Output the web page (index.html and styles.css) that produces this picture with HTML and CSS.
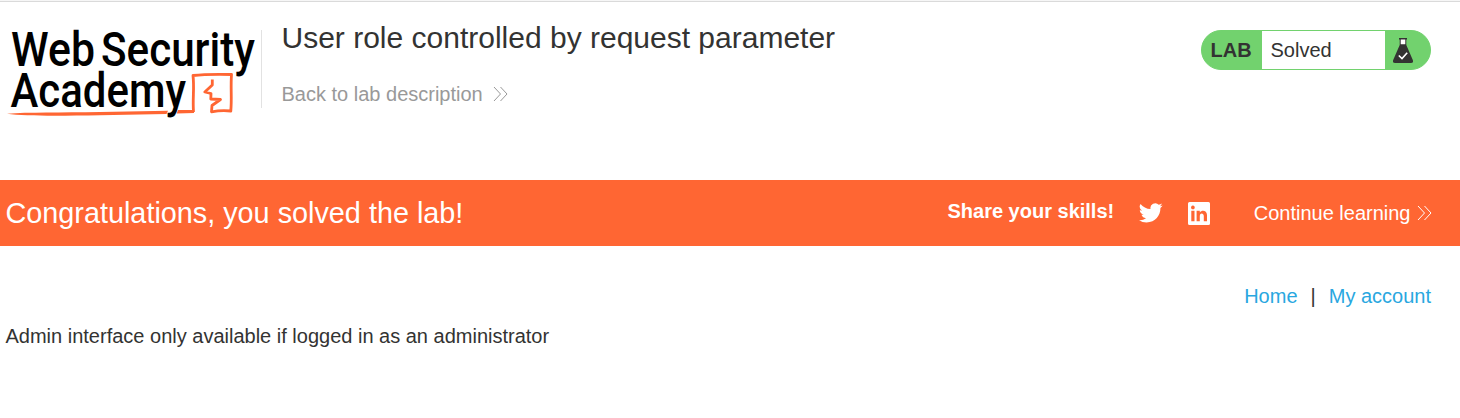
FILE: index.html
```html
<!DOCTYPE html>
<html lang="en">
<head>
<meta charset="utf-8">
<title>User role controlled by request parameter</title>
<link rel="stylesheet" href="styles.css">
</head>
<body>
<header class="lab-header">
  <svg class="logo" viewBox="0 -16 256 112" role="img" aria-label="Web Security Academy">
    <g class="logo-text">
      <text x="11" y="38" textLength="84" lengthAdjust="spacingAndGlyphs">Web</text>
      <text x="101" y="38" textLength="154" lengthAdjust="spacingAndGlyphs">Security</text>
      <text x="10.500" y="79" textLength="175.500" lengthAdjust="spacingAndGlyphs">Academy</text>
    </g>
    <path class="logo-rule" d="M7 85.800 C28 84 60 84.800 100 84 L168 82.800 L166.500 86 L100 87.200 C60 87.900 25 88.200 7 85.800Z M178 82 L194 81.900 L194 85 L176.800 85.500Z"/>
    <path class="logo-mark" d="M193.500 84 C192.500 70 194.500 60 193 47.500 Q206 46 231.500 46.500 C230.500 60 232 70 230.800 83 Q222 81.800 211.500 83.800 L212 77.500 L220.500 71.500 L210.800 71 L211 65.500 L204.800 64 L212.300 57 L212.300 51.500"/>
  </svg>
  <div class="title-block">
    <h1 class="title">User role controlled by request parameter</h1>
    <a class="back-link">Back to lab description
      <svg class="chevrons" viewBox="0 0 15 16"><path d="M1 1 7.500 8 1 15M7.500 1 14 8 7.500 15"/></svg>
    </a>
  </div>
  <div class="lab-status">
    <span class="lab-label">LAB</span>
    <span class="lab-state">Solved</span>
    <span class="lab-icon">
      <svg class="flask" viewBox="0 0 20 26">
        <path class="flask-glass" d="M7 1h6v6H7z"/>
        <path class="flask-body" d="M6 0h8v1.500h-.7V7l6.400 14.800Q21 25 17.800 25H2.200Q-1 25 .3 21.800L6.700 7V1.500H6zM7.700 1.500V6.300h4.600V1.500z"/>
        <path class="flask-check" d="M5.800 17.500 9 20.500 14.200 14.800"/>
      </svg>
    </span>
  </div>
</header>
<section class="banner">
  <h2 class="banner-title">Congratulations, you solved the lab!</h2>
  <span class="share">Share your skills!</span>
  <svg class="twitter" viewBox="0 0 24 20"><path d="M23.600 2.400c-.9.4-1.800.6-2.800.8 1-.6 1.800-1.600 2.100-2.700-.9.6-2 1-3.100 1.200A4.900 4.900 0 0 0 11.500 6.100C7.500 5.900 3.900 4 1.500 1a4.900 4.900 0 0 0 1.500 6.500c-.8 0-1.500-.2-2.200-.6v.1c0 2.300 1.700 4.300 3.900 4.700-.7.200-1.500.2-2.200.1.600 1.900 2.400 3.300 4.500 3.400A9.800 9.800 0 0 1 0 17.200 13.900 13.900 0 0 0 7.500 19.400c9 0 13.900-7.400 13.900-13.900v-.6c.900-.7 1.700-1.500 2.200-2.500z"/></svg>
  <svg class="linkedin" viewBox="0 0 22 23"><path fill-rule="evenodd" d="M1.500 0h19Q22 0 22 1.500v20Q22 23 20.500 23h-19Q0 23 0 21.500v-20Q0 0 1.500 0zM3.300 8.800v10.500h3.200V8.800zM4.900 3.600a1.850 1.850 0 1 0 .01 0zM8.600 8.800v10.500h3.200v-5.200c0-3.500 4-3.200 4 0v5.200H19v-6.200c0-5.100-5.400-5.500-7.200-2.700V8.800z"/></svg>
  <a class="continue">Continue learning
    <svg class="chevrons" viewBox="0 0 15 16"><path d="M1 1 7.500 8 1 15M7.500 1 14 8 7.500 15"/></svg>
  </a>
</section>
<main class="content">
  <nav class="nav"><a class="nav-link">Home</a><span>|</span><a class="nav-link">My account</a></nav>
  <p class="message">Admin interface only available if logged in as an administrator</p>
</main>
</body>
</html>
```
FILE: styles.css
```css
* { box-sizing: border-box; }
body {
  margin: 0;
  background: #fff;
  color: #333332;
  font: 20px/24px "Liberation Sans", Arial, sans-serif;
}
.lab-header {
  display: flex;
  align-items: flex-start;
  height: 180px;
  padding: 29px 29px 0 0;
  border-top: 1px solid #f6f6f6;
  box-shadow: inset 0 1px #dadada;
}
.logo { width: 256px; height: 112px; margin: -18px 5px 0 0; flex: none; }
.logo-text { font: 500 47.5px Roboto, sans-serif; fill: #000; }
.logo-rule { fill: #ff6633; }
.logo-mark { fill: none; stroke: #ff6633; stroke-width: 2.8; stroke-linejoin: round; }
.title-block {
  height: 78px;
  padding-left: 19.5px;
  border-left: 1px solid #e2e2e2;
}
.title { margin: -9px 0 0; font-size: 30px; line-height: 34px; font-weight: 400; white-space: nowrap; }
.back-link { display: flex; align-items: center; gap: 10.5px; margin-top: 27px; color: #999; }
.chevrons { width: 15px; height: 16px; fill: none; stroke: currentColor; stroke-width: 1; }
.lab-status {
  display: flex;
  width: 230px;
  height: 40px;
  margin-left: auto;
  border: 1px solid #72d26e;
  border-radius: 20px;
  background: #72d26e;
  line-height: 39px;
  overflow: hidden;
}
.lab-label { width: 60px; padding-left: 8.5px; font-weight: 700; }
.lab-state { width: 123px; padding-left: 8.5px; background: #fff; }
.lab-icon { padding: 7px 0 0 8px; line-height: 0; }
.flask { width: 20px; height: 26px; }
.flask-glass { fill: #fff; }
.flask-body { fill: #333332; fill-rule: evenodd; }
.flask-check { fill: none; stroke: #fff; stroke-width: 1.6; }
.banner {
  display: flex;
  align-items: center;
  height: 66px;
  padding: 0 28.5px 0 5.5px;
  background: #ff6633;
  color: #fff;
}
.banner-title { margin: 0 auto 0 0; font-size: 28.8px; font-weight: 400; }
.share { margin: 0 25px 4px 0; font-weight: 700; }
.twitter { width: 24px; height: 20px; margin-right: 25px; fill: #fff; }
.linkedin { width: 22px; height: 23px; margin-right: 43.5px; fill: #fff; }
.continue { display: flex; align-items: center; gap: 6px; }
.content { padding: 38px 29px 0 5.5px; }
.nav { display: flex; justify-content: flex-end; gap: 13px; }
.nav-link { color: #29a7df; }
.message { margin: 16px 0 0; }
```
